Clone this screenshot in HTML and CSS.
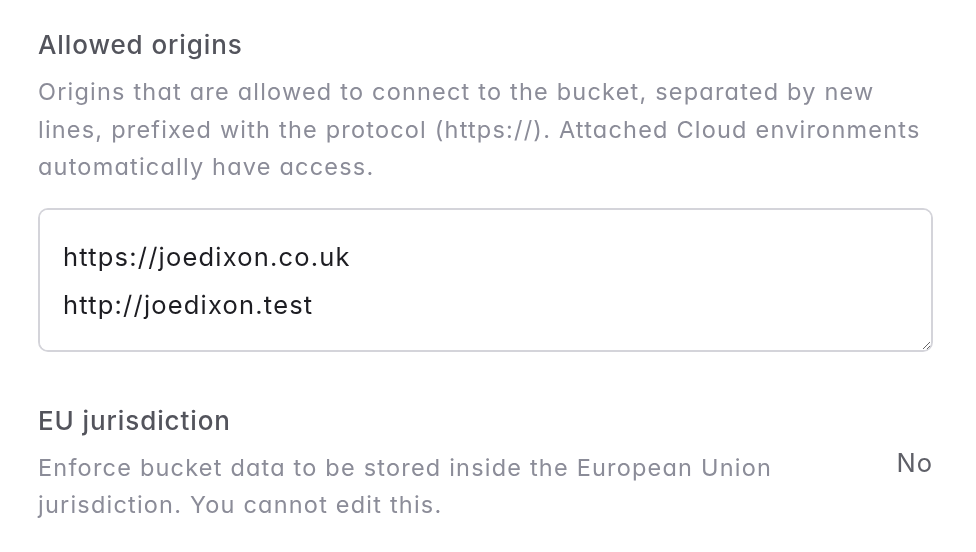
FILE: index.html
```html
<!DOCTYPE html>
<html>
<head>
<meta charset="utf-8">
<link rel="stylesheet" href="styles.css">
</head>
<body>
<div class="page">
  <section class="field">
    <h2 class="label">Allowed origins</h2>
    <p class="desc">Origins that are allowed to connect to the bucket, separated by new lines, prefixed with the protocol (https://). Attached Cloud environments automatically have access.</p>
    <textarea class="origins" spellcheck="false">https://joedixon.co.uk
http://joedixon.test</textarea>
  </section>
  <section class="field row">
    <div class="text">
      <h2 class="label">EU jurisdiction</h2>
      <p class="desc">Enforce bucket data to be stored inside the European Union jurisdiction. You cannot edit this.</p>
    </div>
    <div class="value">No</div>
  </section>
</div>
</body>
</html>
```
FILE: styles.css
```css
html, body {
  margin: 0;
  padding: 0;
  background: #ffffff;
}
body {
  font-family: Inter, "Noto Sans", sans-serif;
  font-feature-settings: "cv11";
}
.page {
  width: 895px;
  padding: 26px 0 0 38px;
}
.field {
  margin: 0;
}
.label {
  margin: 0;
  font-size: 26px;
  line-height: 38px;
  font-weight: 500;
  letter-spacing: 0.9px;
  color: #53545c;
}
.desc {
  margin: 9px 0 0 0;
  font-size: 23.5px;
  line-height: 37.5px;
  font-weight: 400;
  letter-spacing: 1.2px;
  color: #8b8c98;
}
.origins {
  display: block;
  box-sizing: border-box;
  width: 895px;
  height: 144px;
  margin-top: 22px;
  padding: 23px 23px;
  border: 2px solid #d4d4da;
  border-radius: 10px;
  font-family: Inter, "Noto Sans", sans-serif;
  font-feature-settings: "cv11";
  font-size: 25.5px;
  line-height: 48px;
  letter-spacing: 1.2px;
  color: #1d1d22;
  resize: vertical;
  outline: none;
}
.row {
  display: flex;
  justify-content: space-between;
  align-items: flex-start;
  margin-top: 50px;
}
.row .text {
  width: 780px;
}
.value {
  margin-top: 42px;
  font-size: 25.5px;
  line-height: 38px;
  letter-spacing: 1px;
  color: #5f6068;
}
```
